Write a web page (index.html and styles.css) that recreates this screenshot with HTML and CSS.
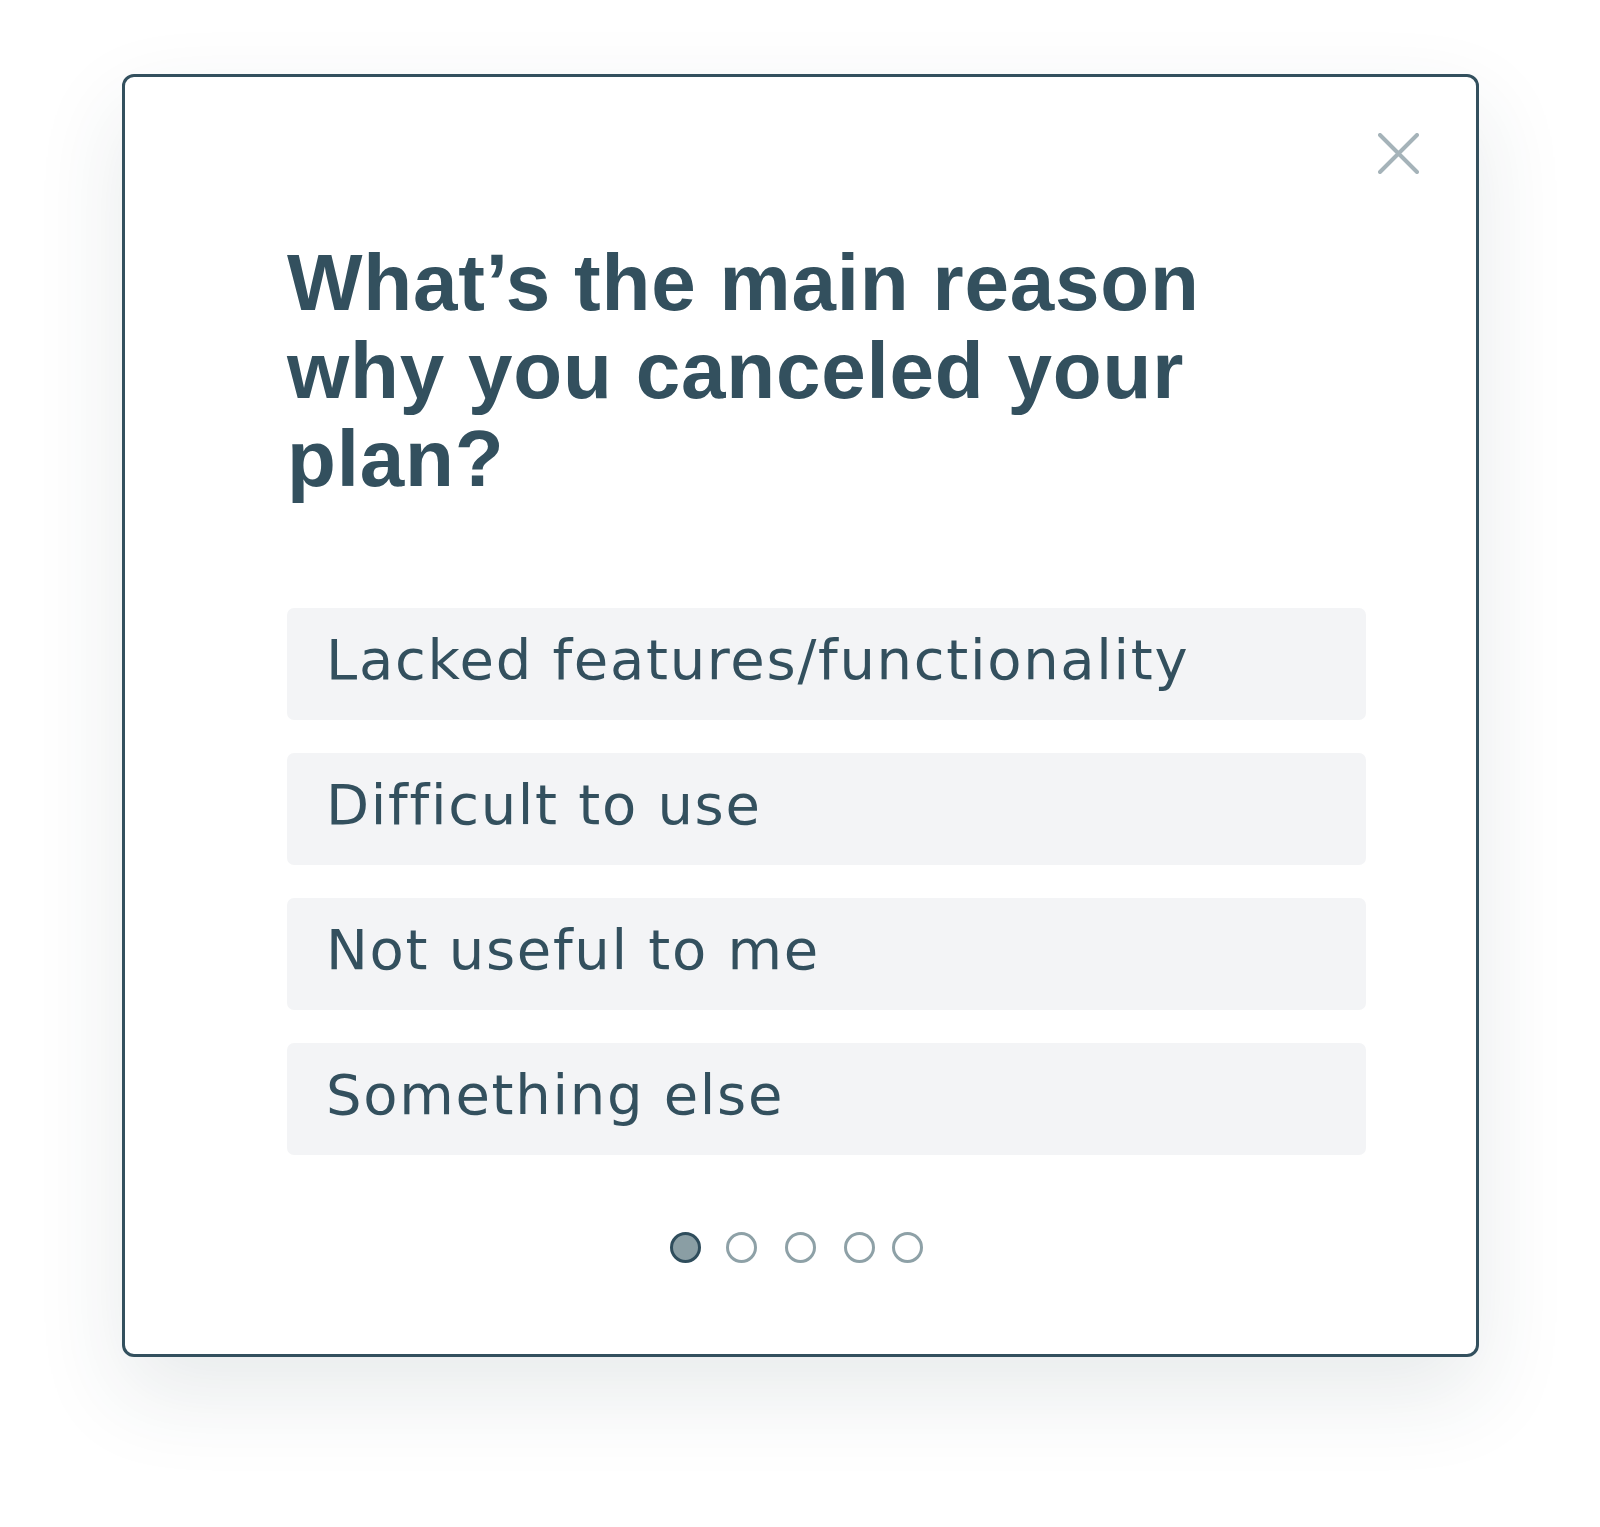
FILE: index.html
```html
<!DOCTYPE html>
<html lang="en">

<head>
  <meta charset="UTF-8">
  <title>Cancel survey</title>
  <link rel="stylesheet" href="styles.css">
</head>

<body>

  <div class="survey">
    <div class="survey-top">
      <button class="close" aria-label="Close">
        <svg viewBox="0 0 41 41" width="41" height="41">
          <path d="M2 2 L39 39 M39 2 L2 39" stroke="#a5b3b9" stroke-width="4" stroke-linecap="round" fill="none"/>
        </svg>
      </button>
    </div>

    <div class="survey-body">
      <h1>What’s the main reason why you canceled your plan?</h1>

      <ul class="options">
        <li><button>Lacked features/functionality</button></li>
        <li><button>Difficult to use</button></li>
        <li><button>Not useful to me</button></li>
        <li><button>Something else</button></li>
      </ul>
    </div>

    <div class="dots">
      <span class="dot active"></span>
      <span class="dot"></span>
      <span class="dot"></span>
      <span class="dot"></span>
      <span class="dot"></span>
    </div>
  </div>

</body>

</html>
```

FILE: styles.css
```css
* {
  box-sizing: border-box;
}

body {
  margin: 0;
  padding: 74px 0 170px 122px;
  min-height: 100vh;
  background-color: #ffffff;
  font-family: "Liberation Sans", Arial, sans-serif;
  color: #33505e;
}

/* CARD */

.survey {
  width: 1357px;
  height: 1283px;
  border: 3px solid #33505e;
  border-radius: 12px;
  background-color: #ffffff;
  box-shadow: 0 36px 90px rgba(40, 60, 70, .11);
}

.survey-top {
  display: flex;
  justify-content: flex-end;
  padding: 56px 57px 0 0;
}

.close {
  width: 41px;
  height: 41px;
  padding: 0;
  border: 0 none;
  background: none;
  cursor: pointer;
}

.close svg {
  display: block;
}

/* QUESTION */

.survey-body {
  padding: 0 110px 0 162px;
}

.survey-body h1 {
  max-width: 960px;
  margin: 65px 0 105px;
  font-size: 80px;
  line-height: 88px;
  font-weight: 700;
  letter-spacing: .8px;
}

.options {
  list-style: none;
  margin: 0;
  padding: 0;
  display: flex;
  flex-direction: column;
  gap: 33px;
}

.options button {
  display: block;
  width: 100%;
  height: 112px;
  padding: 0 0 8px 39px;
  border: 0 none;
  border-radius: 7px;
  background-color: #f3f4f6;
  color: #33505e;
  font-family: "DejaVu Sans", sans-serif;
  font-size: 56px;
  line-height: 104px;
  letter-spacing: 1.7px;
  text-align: left;
  cursor: pointer;
}

/* DOTS */

.dots {
  display: flex;
  justify-content: center;
  gap: 25px;
  margin: 77px 8px 0 0;
}

.dot {
  width: 31px;
  height: 31px;
  border: 3px solid #8ea1a7;
  border-radius: 50%;
  background-color: #ffffff;
}

.dot:nth-child(3) {
  margin: 0 3px;
}

.dot:last-child {
  margin-left: -8px;
}

.dot.active {
  border-color: #2f4d5c;
  background-color: #8a9ea4;
}
```
